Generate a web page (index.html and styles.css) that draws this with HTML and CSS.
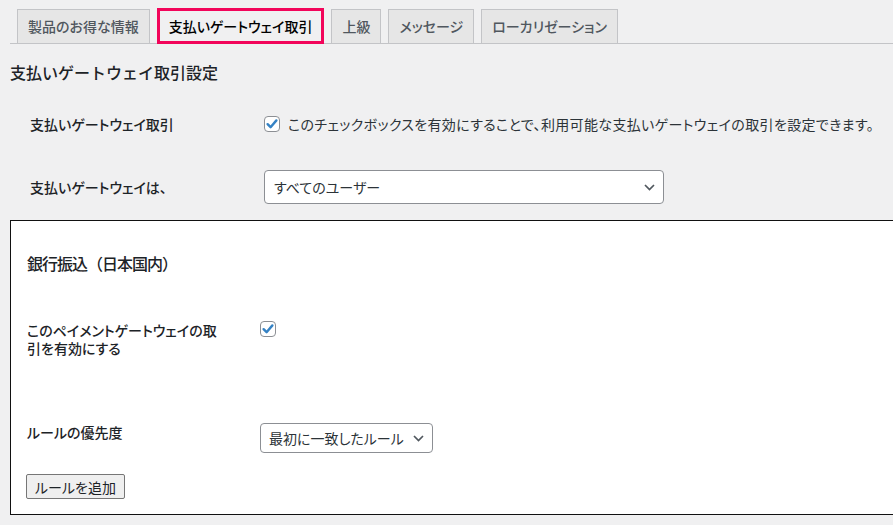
FILE: index.html
```html
<!DOCTYPE html>
<html lang="ja">
<head>
<meta charset="utf-8">
<title>支払いゲートウェイ取引設定</title>
<link rel="stylesheet" href="styles.css">
</head>
<body>
<nav class="tabs">
  <a class="tab">製品のお得な情報</a>
  <a class="tab active">支払いゲートウェイ取引</a>
  <a class="tab">上級</a>
  <a class="tab">メッセージ</a>
  <a class="tab">ローカリゼーション</a>
</nav>

<h2 class="page-title">支払いゲートウェイ取引設定</h2>

<div class="form">
  <div class="row row-check">
    <div class="label">支払いゲートウェイ取引</div>
    <div class="field">
      <span class="cb"><svg width="16" height="16" viewBox="0 0 16 16"><rect x="0.5" y="0.5" width="15" height="15" rx="3.5" fill="#fff" stroke="#8c8f94"/><path d="M3.6 8.2 L6.6 11.2 L12.4 4.4" fill="none" stroke="#3582c4" stroke-width="2.4" stroke-linecap="round" stroke-linejoin="round"/></svg></span>
      <span class="desc">このチェックボックスを有効にすることで、利用可能な支払いゲートウェイの取引を設定できます。</span>
    </div>
  </div>
  <div class="row row-select">
    <div class="label">支払いゲートウェイは、</div>
    <div class="field">
      <div class="select wide"><span>すべてのユーザー</span><svg width="11" height="7" viewBox="0 0 11 7"><path d="M1 1 L5.5 5.5 L10 1" fill="none" stroke="#50575e" stroke-width="1.7"/></svg></div>
    </div>
  </div>
</div>

<section class="gateway">
  <h3 class="gw-title">銀行振込（日本国内）</h3>
  <div class="gw-row gw-enable">
    <div class="gw-label">このペイメントゲートウェイの取引を有効にする</div>
    <div class="gw-field">
      <span class="cb"><svg width="16" height="16" viewBox="0 0 16 16"><rect x="0.5" y="0.5" width="15" height="15" rx="3.5" fill="#fff" stroke="#8c8f94"/><path d="M3.6 8.2 L6.6 11.2 L12.4 4.4" fill="none" stroke="#3582c4" stroke-width="2.4" stroke-linecap="round" stroke-linejoin="round"/></svg></span>
    </div>
  </div>
  <div class="gw-row gw-priority">
    <div class="gw-label">ルールの優先度</div>
    <div class="gw-field">
      <div class="select small"><span>最初に一致したルール</span><svg width="11" height="7" viewBox="0 0 11 7"><path d="M1 1 L5.5 5.5 L10 1" fill="none" stroke="#50575e" stroke-width="1.7"/></svg></div>
    </div>
  </div>
  <button class="btn" type="button">ルールを追加</button>
</section>
</body>
</html>
```

FILE: styles.css
```css
html, body {
  margin: 0;
  padding: 0;
  overflow: hidden;
}
body {
  background: #f0f0f1;
  font-family: "Noto Sans CJK JP", "Noto Sans", sans-serif;
  font-feature-settings: "palt";
  font-size: 14px;
  color: #1d2327;
  width: 893px;
  height: 525px;
}

/* Tabs */
.tabs {
  display: flex;
  align-items: flex-end;
  gap: 7px;
  margin-left: 10px;
  padding: 9px 0 0 7px;
  height: 34px;
  border-bottom: 1px solid #c3c4c7;
}
.tab {
  display: block;
  box-sizing: border-box;
  height: 34px;
  padding: 0 10px;
  line-height: 33px;
  background: #e6e6e6;
  border: 1px solid #c3c4c7;
  border-bottom: none;
  color: #50575e;
  font-weight: 500;
  font-size: 14px;
  white-space: nowrap;
}
.tab.active {
  height: 36px;
  margin-bottom: -1px;
  padding: 0 9px;
  line-height: 30px;
  background: #f0f0f1;
  border: 3px solid #f2055a;
  color: #000;
}

.page-title {
  margin: 16px 0 0 10px;
  font-size: 16px;
  line-height: 24px;
  font-weight: 500;
  font-feature-settings: normal;
  color: #1d2327;
}

/* Top form */
.form {
  padding-left: 30px;
}
.row {
  display: flex;
  align-items: center;
}
.row .label {
  flex: 0 0 234px;
  font-weight: 500;
  line-height: 20px;
}
.row .field {
  display: flex;
  align-items: center;
}
.row-check {
  margin-top: 30px;
}
.row-select {
  margin-top: 36px;
}
.cb {
  display: inline-flex;
  width: 16px;
  height: 16px;
}
.desc {
  margin-left: 8px;
  color: #2c3338;
  line-height: 20px;
  letter-spacing: 0.35px;
  white-space: nowrap;
}

.select {
  box-sizing: border-box;
  display: flex;
  align-items: center;
  justify-content: space-between;
  background: #fff;
  border: 1px solid #8c8f94;
  border-radius: 4px;
  color: #2c3338;
  white-space: nowrap;
}
.select.wide {
  width: 400px;
  height: 34px;
  padding: 0 8px 0 9px;
}
.select.small {
  width: 173px;
  height: 30px;
  padding: 0 8px 0 8px;
}

/* Gateway box */
.gateway {
  box-sizing: border-box;
  margin: 16px 0 0 10px;
  width: 900px;
  height: 295px;
  background: #fff;
  border: 1px solid #111;
  padding: 30px 0 0 16px;
}
.gw-title {
  margin: 0;
  font-size: 16px;
  line-height: 24px;
  font-weight: 500;
  font-feature-settings: normal;
  letter-spacing: -1px;
  color: #1d2327;
}
.gw-row {
  display: flex;
  align-items: flex-start;
}
.gw-label {
  flex: 0 0 196px;
  margin-right: 37px;
  line-height: 18px;
  color: #1d2327;
  font-weight: 500;
}
.gw-field {
  display: flex;
}
.gw-enable {
  margin-top: 46px;
}
.gw-priority {
  margin-top: 66px;
}
.btn {
  display: block;
  margin: 21px 0 0 -1px;
  height: 25px;
  padding: 0 8px;
  background: #efefef;
  border: 1px solid #767676;
  border-radius: 2px;
  font-family: inherit;
  font-feature-settings: "palt";
  font-size: 14px;
  color: #1d2327;
}
```
